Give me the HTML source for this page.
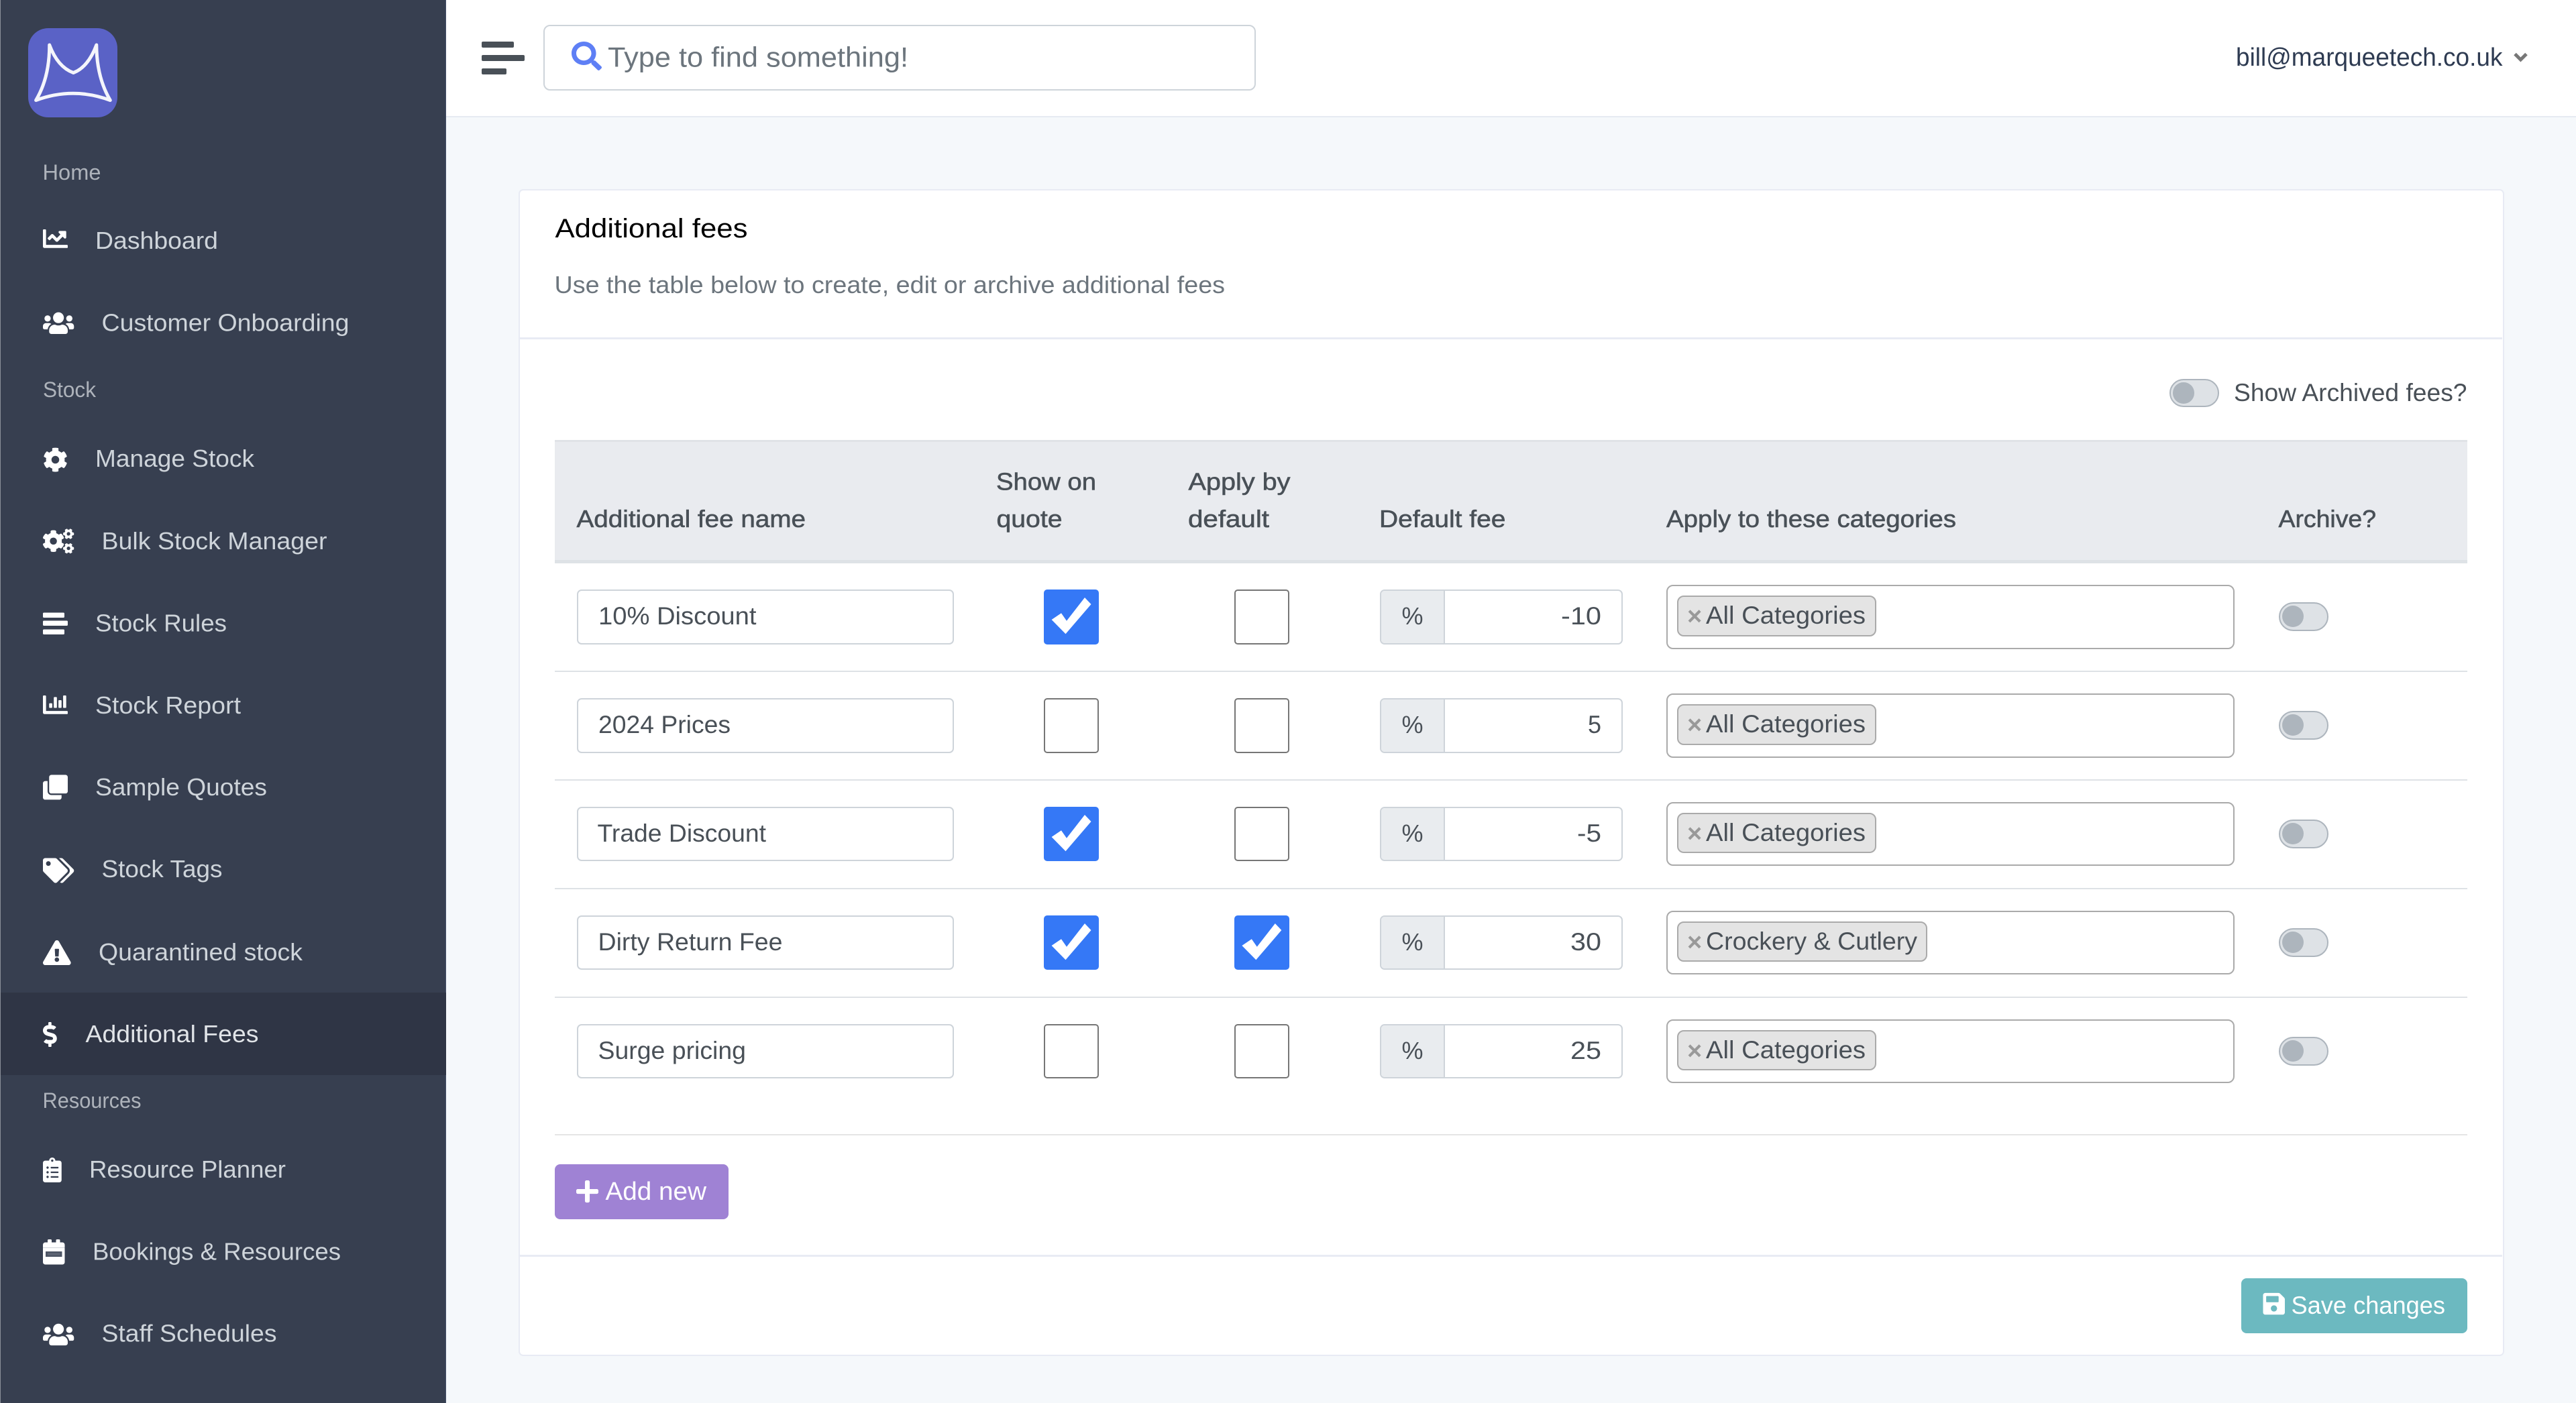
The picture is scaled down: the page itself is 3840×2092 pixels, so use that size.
<!DOCTYPE html>
<html lang="en">
<head>
<meta charset="utf-8">
<title>Additional fees</title>
<style>
html,body{margin:0;padding:0;width:3840px;height:2092px;overflow:hidden;background:#f5f8fb}
*{box-sizing:border-box}
#page{position:relative;width:3840px;height:2092px;overflow:hidden;background:#f5f8fb}
.abs,.box,.row{position:absolute}
svg.o{position:absolute;left:0;top:0;overflow:visible}
svg.o text{font-family:"Liberation Sans",sans-serif;white-space:pre}
#side{left:1px;top:0;width:664px;height:2092px;background:#373f50;position:absolute;border-right:1px solid #46506a}
#edge{left:0;top:0;width:1px;height:2092px;background:#8a8f99;position:absolute}
#active{position:absolute;left:1px;top:1480px;width:664px;height:123px;background:#2f3545}
#logo{position:absolute;left:42px;top:42px;width:133px;height:133px;border-radius:30px;background:#5a62c6}
#head{position:absolute;left:665px;top:0;width:3175px;height:175px;background:#fff;border-bottom:2.5px solid #e6eaf2}
#search{position:absolute;left:809.5px;top:37px;width:1062px;height:98px;background:#fff;border:2.5px solid #ced4da;border-radius:10px}
.bar{position:absolute;background:#495057;border-radius:2px;left:718px}
#card{position:absolute;left:772.5px;top:282px;width:2960px;height:1740px;background:#fff;border:2.5px solid #e8ebf4;border-radius:7px}
.hr{position:absolute;height:2.5px}
#thead{position:absolute;left:827px;top:656px;width:2851px;height:184px;background:#e9ebef;border-top:3px solid #e0e3e7;border-bottom:5px solid #dee2e6}
.input{position:absolute;left:859.5px;top:879px;width:562px;height:81.5px;background:#fff;border:2.5px solid #ced4da;border-radius:7px}
.cb{position:absolute;top:879px;width:82px;height:81.5px;background:#fff;border:2.5px solid #767676;border-radius:5px}
.cb.on{background:#3578f6;border-color:#3578f6}
.c1{left:1555.5px}.c2{left:1840px}
.grp{position:absolute;left:2057px;top:879px;width:362px;height:81.5px;background:#fff;border:2.5px solid #ced4da;border-radius:7px;overflow:hidden}
.add{position:absolute;left:0;top:0;bottom:0;width:95px;background:#e9ecef;border-right:2.5px solid #ced4da}
.sel{position:absolute;left:2484px;top:872px;width:846.5px;height:95.5px;background:#fff;border:2.5px solid #aaa;border-radius:10px}
.tag{position:absolute;left:2500px;top:888px;height:60.5px;background:#e4e4e4;border:2.5px solid #aaa;border-radius:10px}
.tog{position:absolute;background:#dee2e6;border:2.5px solid #adb5bd;border-radius:30px}
.tog i{position:absolute;display:block;background:#adb5bd;border-radius:50%}
.row{left:0;width:3840px;height:162px}
.btn{position:absolute;border-radius:8px}
</style>
</head>
<body>
<div id="page">
<div id="edge"></div>
<div id="side"></div>
<div id="active"></div>
<div id="logo"></div>
<div id="head"></div>
<div class="bar" style="top:62px;width:48px;height:9px"></div>
<div class="bar" style="top:82px;width:64px;height:9px"></div>
<div class="bar" style="top:102px;width:37px;height:8.5px"></div>
<div id="search"></div>
<div id="card"></div>
<div class="hr" style="left:775px;top:503px;width:2955px;background:#e8ebf4"></div>
<div class="hr" style="left:775px;top:1871px;width:2955px;height:3px;background:#e8ebf4"></div>
<div class="hr" style="left:827px;top:1690.5px;width:2851px;background:#e5e5e5"></div>
<div id="thead"></div>
<div class="hr" style="left:827px;top:999.5px;width:2851px;background:#dee2e6"></div>
<div class="hr" style="left:827px;top:1161.5px;width:2851px;background:#dee2e6"></div>
<div class="hr" style="left:827px;top:1323.5px;width:2851px;background:#dee2e6"></div>
<div class="hr" style="left:827px;top:1485.5px;width:2851px;background:#dee2e6"></div>
<div class="tog" style="left:3234px;top:565px;width:74px;height:42px"><i style="left:3px;top:3px;width:31.5px;height:31.5px"></i></div>
<div class="btn" style="left:827px;top:1735.5px;width:259px;height:82.5px;background:#9f82d4"></div>
<div class="btn" style="left:3341px;top:1906px;width:337px;height:82px;background:#6cb9c0"></div>

<svg class="o" width="3840" height="2092" viewBox="0 0 3840 2092">
<!-- logo -->
<path d="M73.7 67Q86 100 109.4 108.5Q131.5 100 143.8 67Q144 115 164.3 149.5Q109 129 53.6 149.5Q74 115 73.7 67Z" fill="none" stroke="#f4f5fb" stroke-width="5" stroke-linejoin="round"/>
<!-- sidebar labels -->
<g font-size="32" fill="#aeb3bb">
<text x="63.5" y="268" textLength="87" lengthAdjust="spacingAndGlyphs">Home</text>
<text x="64" y="592" textLength="79" lengthAdjust="spacingAndGlyphs">Stock</text>
<text x="63.5" y="1652" textLength="147" lengthAdjust="spacingAndGlyphs">Resources</text>
</g>
<g font-size="36" fill="#ced4da">
<text x="142" y="371" textLength="183" lengthAdjust="spacingAndGlyphs">Dashboard</text>
<text x="151.5" y="493.5" textLength="369" lengthAdjust="spacingAndGlyphs">Customer Onboarding</text>
<text x="142" y="696" textLength="237" lengthAdjust="spacingAndGlyphs">Manage Stock</text>
<text x="151.5" y="819" textLength="336" lengthAdjust="spacingAndGlyphs">Bulk Stock Manager</text>
<text x="142" y="941.5" textLength="196" lengthAdjust="spacingAndGlyphs">Stock Rules</text>
<text x="142" y="1064" textLength="217" lengthAdjust="spacingAndGlyphs">Stock Report</text>
<text x="142" y="1186" textLength="256" lengthAdjust="spacingAndGlyphs">Sample Quotes</text>
<text x="151.5" y="1308" textLength="180" lengthAdjust="spacingAndGlyphs">Stock Tags</text>
<text x="147" y="1432" textLength="304" lengthAdjust="spacingAndGlyphs">Quarantined stock</text>
<text x="127.5" y="1554" textLength="258" lengthAdjust="spacingAndGlyphs" fill="#e1e4e8">Additional Fees</text>
<text x="133" y="1756" textLength="293" lengthAdjust="spacingAndGlyphs">Resource Planner</text>
<text x="138" y="1878.5" textLength="370" lengthAdjust="spacingAndGlyphs">Bookings &amp; Resources</text>
<text x="151.5" y="2000.5" textLength="261" lengthAdjust="spacingAndGlyphs">Staff Schedules</text>
</g>
<!-- sidebar icons -->
<g fill="#fff">
<path transform="translate(64 337.4) scale(.0723)" d="M496 384H64V80c0-8.84-7.16-16-16-16H16C7.16 64 0 71.16 0 80v336c0 17.67 14.33 32 32 32h464c8.84 0 16-7.16 16-16v-32c0-8.84-7.16-16-16-16zM464 96H345.94c-21.38 0-32.09 25.85-16.97 40.97l32.4 32.4L288 242.75l-73.37-73.37c-12.5-12.5-32.76-12.5-45.25 0l-68.69 68.69c-6.25 6.25-6.25 16.38 0 22.63l22.62 22.62c6.25 6.25 16.38 6.25 22.63 0L192 237.25l73.37 73.37c12.5 12.5 32.76 12.5 45.25 0l96-96 32.4 32.4c15.12 15.12 40.97 4.41 40.97-16.97V112c.01-8.84-7.15-16-15.99-16z"/>
<path transform="translate(64 463.3) scale(.0723)" d="M96 224c35.3 0 64-28.7 64-64s-28.7-64-64-64-64 28.7-64 64 28.7 64 64 64zm448 0c35.3 0 64-28.7 64-64s-28.7-64-64-64-64 28.7-64 64 28.7 64 64 64zm32 32h-64c-17.6 0-33.5 7.1-45.1 18.6 40.3 22.1 68.9 62 75.1 109.4h66c17.7 0 32-14.3 32-32v-32c0-35.3-28.7-64-64-64zm-256 0c61.9 0 112-50.1 112-112S381.9 32 320 32 208 82.1 208 144s50.1 112 112 112zm76.8 32h-8.3c-20.8 10-43.9 16-68.5 16s-47.6-6-68.5-16h-8.3C179.6 288 128 339.6 128 403.2V432c0 26.5 21.5 48 48 48h288c26.5 0 48-21.5 48-48v-28.8c0-63.6-51.6-115.2-115.2-115.2zm-223.7-13.4C161.5 263.1 145.6 256 128 256H64c-35.3 0-64 28.7-64 64v32c0 17.7 14.3 32 32 32h65.9c6.3-47.4 34.9-87.3 75.2-109.4z"/>
<path transform="translate(64 667) scale(.0723)" d="M487.4 315.7l-42.6-24.6c4.3-23.2 4.3-47 0-70.2l42.6-24.6c4.9-2.8 7.1-8.6 5.5-14-11.1-35.6-30-67.8-54.7-94.6-3.8-4.1-10-5.1-14.8-2.3L380.8 110c-17.9-15.4-38.5-27.3-60.8-35.1V25.8c0-5.6-3.9-10.5-9.4-11.7-36.7-8.2-74.3-7.8-109.2 0-5.5 1.2-9.4 6.1-9.4 11.7V75c-22.2 7.9-42.8 19.8-60.8 35.1L88.7 85.5c-4.9-2.8-11-1.9-14.8 2.3-24.7 26.7-43.6 58.9-54.7 94.6-1.7 5.4.6 11.2 5.5 14L67.3 221c-4.3 23.2-4.3 47 0 70.2l-42.6 24.6c-4.9 2.8-7.1 8.6-5.5 14 11.1 35.6 30 67.8 54.7 94.6 3.8 4.1 10 5.1 14.8 2.3l42.6-24.6c17.9 15.4 38.5 27.3 60.8 35.1v49.2c0 5.6 3.9 10.5 9.4 11.7 36.7 8.2 74.3 7.8 109.2 0 5.5-1.2 9.4-6.1 9.4-11.7v-49.2c22.2-7.9 42.8-19.8 60.8-35.1l42.6 24.6c4.9 2.8 11 1.9 14.8-2.3 24.7-26.7 43.6-58.9 54.7-94.6 1.5-5.5-.7-11.3-5.6-14.1zM256 336c-44.1 0-80-35.9-80-80s35.9-80 80-80 80 35.9 80 80-35.9 80-80 80z"/>
<path transform="translate(64 788.4) scale(.0723)" d="M512.1 191l-8.2 14.3c-3 5.3-9.4 7.5-15.1 5.4-11.8-4.4-22.6-10.7-32.1-18.6-4.6-3.8-5.8-10.5-2.8-15.7l8.2-14.3c-6.9-8-12.3-17.3-15.9-27.4h-16.5c-6 0-11.2-4.3-12.2-10.3-2-12-2.1-24.6 0-37.1 1-6 6.2-10.4 12.2-10.4h16.5c3.6-10.1 9-19.4 15.9-27.4l-8.2-14.3c-3-5.2-1.9-11.9 2.8-15.7 9.5-7.9 20.4-14.2 32.1-18.6 5.7-2.1 12.1.1 15.1 5.4l8.2 14.3c10.5-1.9 21.2-1.9 31.7 0L552 6.3c3-5.3 9.4-7.5 15.1-5.4 11.8 4.4 22.6 10.7 32.1 18.6 4.6 3.8 5.8 10.5 2.8 15.7l-8.2 14.3c6.9 8 12.3 17.3 15.9 27.4h16.5c6 0 11.2 4.3 12.2 10.3 2 12 2.1 24.6 0 37.1-1 6-6.2 10.4-12.2 10.4h-16.5c-3.6 10.1-9 19.4-15.9 27.4l8.2 14.3c3 5.2 1.9 11.9-2.8 15.7-9.5 7.9-20.4 14.2-32.1 18.6-5.7 2.1-12.1-.1-15.1-5.4l-8.2-14.3c-10.4 1.9-21.2 1.9-31.7 0zm-10.5-58.8c38.5 29.6 82.4-14.3 52.8-52.8-38.5-29.7-82.4 14.3-52.8 52.8zM386.3 286.1l33.7 16.8c10.1 5.8 14.5 18.1 10.5 29.1-8.9 24.2-26.4 46.4-42.6 65.8-7.4 8.9-20.2 11.1-30.3 5.3l-29.1-16.8c-16 13.7-34.6 24.6-54.9 31.7v33.6c0 11.6-8.3 21.6-19.7 23.6-24.6 4.2-50.4 4.4-75.9 0-11.5-2-20-11.9-20-23.6V418c-20.3-7.2-38.9-18-54.9-31.7L74 403c-10 5.8-22.9 3.6-30.3-5.3-16.2-19.4-33.3-41.6-42.2-65.7-4-10.9.4-23.2 10.5-29.1l33.3-16.8c-3.9-20.9-3.9-42.4 0-63.4L12 205.8c-10.1-5.8-14.6-18.1-10.5-29 8.9-24.2 26-46.4 42.2-65.8 7.4-8.9 20.2-11.1 30.3-5.3l29.1 16.8c16-13.7 34.6-24.6 54.9-31.7V57.1c0-11.5 8.2-21.5 19.6-23.5 24.6-4.2 50.5-4.4 76-.1 11.5 2 20 11.9 20 23.6v33.6c20.3 7.2 38.9 18 54.9 31.7l29.1-16.8c10-5.8 22.9-3.6 30.3 5.3 16.2 19.4 33.2 41.6 42.1 65.8 4 10.9.1 23.2-10 29.1l-33.7 16.8c3.9 21 3.9 42.5 0 63.5zm-117.6 21.1c59.2-77-28.7-164.9-105.7-105.7-59.2 77 28.7 164.9 105.7 105.7zm243.4 182.7l-8.2 14.3c-3 5.3-9.4 7.5-15.1 5.4-11.8-4.4-22.6-10.7-32.1-18.6-4.6-3.8-5.8-10.5-2.8-15.7l8.2-14.3c-6.9-8-12.3-17.3-15.9-27.4h-16.5c-6 0-11.2-4.3-12.2-10.3-2-12-2.1-24.6 0-37.1 1-6 6.2-10.4 12.2-10.4h16.5c3.6-10.1 9-19.4 15.9-27.4l-8.2-14.3c-3-5.2-1.9-11.9 2.8-15.7 9.5-7.9 20.4-14.2 32.1-18.6 5.7-2.1 12.1.1 15.1 5.4l8.2 14.3c10.5-1.9 21.2-1.9 31.7 0l8.2-14.3c3-5.3 9.4-7.5 15.1-5.4 11.8 4.4 22.6 10.7 32.1 18.6 4.6 3.8 5.8 10.5 2.8 15.7l-8.2 14.3c6.9 8 12.3 17.3 15.9 27.4h16.5c6 0 11.2 4.3 12.2 10.3 2 12 2.1 24.6 0 37.1-1 6-6.2 10.4-12.2 10.4h-16.5c-3.6 10.1-9 19.4-15.9 27.4l8.2 14.3c3 5.2 1.9 11.9-2.8 15.7-9.5 7.9-20.4 14.2-32.1 18.6-5.7 2.1-12.1-.1-15.1-5.4l-8.2-14.3c-10.4 1.9-21.2 1.9-31.7 0zM501.6 431c38.5 29.6 82.4-14.3 52.8-52.8-38.5-29.6-82.4 14.3-52.8 52.8z"/>
<rect x="64" y="913.5" width="32" height="7.5" rx="1.5"/><rect x="64" y="925.5" width="37" height="7.5" rx="1.5"/><rect x="64" y="938.5" width="32" height="7.5" rx="1.5"/>
<path transform="translate(64 1032.4) scale(.0723)" d="M332.8 320h38.4c6.4 0 12.8-6.4 12.8-12.8V172.8c0-6.4-6.4-12.8-12.8-12.8h-38.4c-6.4 0-12.8 6.4-12.8 12.8v134.4c0 6.4 6.4 12.8 12.8 12.8zm96 0h38.4c6.4 0 12.8-6.4 12.8-12.8V76.8c0-6.4-6.4-12.8-12.8-12.8h-38.4c-6.4 0-12.8 6.4-12.8 12.8v230.4c0 6.4 6.4 12.8 12.8 12.8zm-288 0h38.4c6.4 0 12.8-6.4 12.8-12.8v-70.4c0-6.4-6.4-12.8-12.8-12.8h-38.4c-6.4 0-12.8 6.4-12.8 12.8v70.4c0 6.4 6.4 12.8 12.8 12.8zm96 0h38.4c6.4 0 12.8-6.4 12.8-12.8V108.8c0-6.4-6.4-12.8-12.8-12.8h-38.4c-6.4 0-12.8 6.4-12.8 12.8v198.4c0 6.4 6.4 12.8 12.8 12.8zM496 384H64V80c0-8.84-7.16-16-16-16H16C7.16 64 0 71.16 0 80v336c0 17.67 14.33 32 32 32h464c8.84 0 16-7.16 16-16v-32c0-8.84-7.16-16-16-16z"/>
<path transform="translate(64 1155.4) scale(.0723)" d="M464 0c26.51 0 48 21.49 48 48v288c0 26.51-21.49 48-48 48H176c-26.51 0-48-21.49-48-48V48c0-26.51 21.49-48 48-48h288M176 416c-44.112 0-80-35.888-80-80V128H48c-26.51 0-48 21.49-48 48v288c0 26.51 21.49 48 48 48h288c26.51 0 48-21.49 48-48v-48H176z"/>
<path transform="translate(64 1279.5) scale(.0723)" d="M497.941 225.941L286.059 14.059A48 48 0 0 0 252.118 0H48C21.49 0 0 21.49 0 48v204.118a48 48 0 0 0 14.059 33.941l211.882 211.882c18.744 18.745 49.136 18.746 67.882 0l204.118-204.118c18.745-18.745 18.745-49.137 0-67.882zM112 160c-26.51 0-48-21.49-48-48s21.49-48 48-48 48 21.49 48 48-21.49 48-48 48zm513.941 133.823L421.823 497.941c-18.745 18.745-49.137 18.745-67.882 0l-.36-.36L527.64 323.522c16.999-16.999 26.36-39.6 26.36-63.64s-9.362-46.641-26.36-63.64L331.397 0h48.721a48 48 0 0 1 33.941 14.059l211.882 211.882c18.745 18.745 18.745 49.137 0 67.882z"/>
<path transform="translate(64 1402) scale(.0723)" d="M569.517 440.013C587.975 472.007 564.806 512 527.94 512H48.054c-36.937 0-59.999-40.055-41.577-71.987L246.423 24.035c18.467-32.009 64.72-31.951 83.154 0l239.94 415.978zM288 354c-25.405 0-46 20.595-46 46s20.595 46 46 46 46-20.595 46-46-20.595-46-46-46zm-43.673-165.346l7.418 136c.347 6.364 5.609 11.346 11.982 11.346h48.546c6.373 0 11.635-4.982 11.982-11.346l7.418-136c.375-6.874-5.098-12.654-11.982-12.654h-63.383c-6.884 0-12.356 5.78-11.981 12.654z"/>
<path transform="translate(64 1524) scale(.0723)" d="M209.2 233.4l-108-31.6C88.7 198.2 80 186.5 80 173.5c0-16.3 13.2-29.5 29.5-29.5h66.3c12.2 0 24.2 3.7 34.2 10.5 6.1 4.1 14.3 3.1 19.5-2l34.8-34c7.1-6.9 6.1-18.4-1.8-24.5C238 74.8 207.4 64.1 176 64V16c0-8.8-7.2-16-16-16h-32c-8.8 0-16 7.2-16 16v48h-2.5C45.8 64-5.4 118.7.5 183.6c4.2 46.1 39.4 83.6 83.8 96.6l102.5 30c12.5 3.7 21.2 15.3 21.2 28.3 0 16.3-13.2 29.5-29.5 29.5h-66.3C100 368 88 364.3 78 357.5c-6.1-4.1-14.3-3.1-19.5 2l-34.8 34c-7.1 6.9-6.1 18.4 1.8 24.5 24.5 19.2 55.1 29.9 86.5 30v48c0 8.8 7.2 16 16 16h32c8.8 0 16-7.2 16-16v-48.2c46.6-.9 90.3-28.6 105.7-72.7 21.5-61.6-14.6-124.8-72.5-141.7z"/>
<path transform="translate(64 1726) scale(.0723)" d="M336 64h-80c0-35.3-28.7-64-64-64s-64 28.7-64 64H48C21.5 64 0 85.5 0 112v352c0 26.5 21.5 48 48 48h288c26.5 0 48-21.5 48-48V112c0-26.5-21.5-48-48-48zM96 424c-13.3 0-24-10.7-24-24s10.7-24 24-24 24 10.7 24 24-10.7 24-24 24zm0-96c-13.3 0-24-10.7-24-24s10.7-24 24-24 24 10.7 24 24-10.7 24-24 24zm0-96c-13.3 0-24-10.7-24-24s10.7-24 24-24 24 10.7 24 24-10.7 24-24 24zm96-192c13.3 0 24 10.7 24 24s-10.7 24-24 24-24-10.7-24-24 10.7-24 24-24zm128 368c0 4.4-3.6 8-8 8H168c-4.4 0-8-3.6-8-8v-16c0-4.4 3.6-8 8-8h144c4.4 0 8 3.6 8 8v16zm0-96c0 4.4-3.6 8-8 8H168c-4.4 0-8-3.6-8-8v-16c0-4.4 3.6-8 8-8h144c4.4 0 8 3.6 8 8v16zm0-96c0 4.4-3.6 8-8 8H168c-4.4 0-8-3.6-8-8v-16c0-4.4 3.6-8 8-8h144c4.4 0 8 3.6 8 8v16z"/>
<rect x="71" y="1848" width="6" height="9" rx="1.5"/><rect x="83.5" y="1848" width="6" height="9" rx="1.5"/>
<rect x="64" y="1852.5" width="32.5" height="33" rx="3.5"/>
<rect x="64" y="1860" width="32.5" height="1" fill="#cfd3d9"/>
<rect x="68" y="1866" width="24.5" height="8" fill="#4d5565"/>
<rect x="71" y="1868.5" width="18.5" height="3" fill="#5f6675"/>
<path transform="translate(64 1971.4) scale(.0723)" d="M96 224c35.3 0 64-28.7 64-64s-28.7-64-64-64-64 28.7-64 64 28.7 64 64 64zm448 0c35.3 0 64-28.7 64-64s-28.7-64-64-64-64 28.7-64 64 28.7 64 64 64zm32 32h-64c-17.6 0-33.5 7.1-45.1 18.6 40.3 22.1 68.9 62 75.1 109.4h66c17.7 0 32-14.3 32-32v-32c0-35.3-28.7-64-64-64zm-256 0c61.9 0 112-50.1 112-112S381.9 32 320 32 208 82.1 208 144s50.1 112 112 112zm76.8 32h-8.3c-20.8 10-43.9 16-68.5 16s-47.6-6-68.5-16h-8.3C179.6 288 128 339.6 128 403.2V432c0 26.5 21.5 48 48 48h288c26.5 0 48-21.5 48-48v-28.8c0-63.6-51.6-115.2-115.2-115.2zm-223.7-13.4C161.5 263.1 145.6 256 128 256H64c-35.3 0-64 28.7-64 64v32c0 17.7 14.3 32 32 32h65.9c6.3-47.4 34.9-87.3 75.2-109.4z"/>
</g>
<!-- header -->
<path transform="translate(852 62) scale(.0879 .084)" d="M505 442.7L405.3 343c-4.5-4.5-10.6-7-17-7H372c27.6-35.3 44-79.7 44-128C416 93.1 322.9 0 208 0S0 93.1 0 208s93.1 208 208 208c48.3 0 92.7-16.4 128-44v16.3c0 6.4 2.5 12.5 7 17l99.7 99.7c9.4 9.4 24.6 9.4 33.9 0l28.3-28.3c9.4-9.4 9.4-24.6.1-34zM208 336c-70.7 0-128-57.2-128-128 0-70.7 57.2-128 128-128 70.7 0 128 57.2 128 128 0 70.7-57.2 128-128 128z" fill="#5e7ff5"/>
<text x="906" y="99.5" font-size="42" fill="#6c757d" textLength="448" lengthAdjust="spacingAndGlyphs">Type to find something!</text>
<text x="3333" y="98" font-size="38" fill="#2e3b52" textLength="397.5" lengthAdjust="spacingAndGlyphs">bill@marqueetech.co.uk</text>
<path d="M3749 80.5L3757.5 89L3766 80.5" fill="none" stroke="#777" stroke-width="5"/>
<!-- card head -->
<text x="827.5" y="354" font-size="40" fill="#000" textLength="287" lengthAdjust="spacingAndGlyphs">Additional fees</text>
<text x="826.5" y="437" font-size="36" fill="#6c757d" textLength="999.5" lengthAdjust="spacingAndGlyphs">Use the table below to create, edit or archive additional fees</text>
<text x="3330" y="598" font-size="37" fill="#495057" textLength="347.5" lengthAdjust="spacingAndGlyphs">Show Archived fees?</text>
<!-- table head -->
<g font-size="36" fill="#495057" stroke="#495057" stroke-width=".6">
<text x="859.5" y="786" textLength="341.5" lengthAdjust="spacingAndGlyphs">Additional fee name</text>
<text x="1485" y="730.5" textLength="149" lengthAdjust="spacingAndGlyphs">Show on</text>
<text x="1485.5" y="786" textLength="98" lengthAdjust="spacingAndGlyphs">quote</text>
<text x="1771.5" y="730.5" textLength="152" lengthAdjust="spacingAndGlyphs">Apply by</text>
<text x="1771" y="786" textLength="121" lengthAdjust="spacingAndGlyphs">default</text>
<text x="2056" y="786" textLength="188.5" lengthAdjust="spacingAndGlyphs">Default fee</text>
<text x="2484" y="786" textLength="432" lengthAdjust="spacingAndGlyphs">Apply to these categories</text>
<text x="3396.5" y="786" textLength="145.5" lengthAdjust="spacingAndGlyphs">Archive?</text>
</g>
<!-- buttons -->
<path transform="translate(859 1757.7) scale(.0737)" d="M416 208H272V64c0-17.67-14.33-32-32-32h-32c-17.67 0-32 14.33-32 32v144H32c-17.67 0-32 14.33-32 32v32c0 17.67 14.33 32 32 32h144v144c0 17.67 14.33 32 32 32h32c17.67 0 32-14.33 32-32V304h144c17.67 0 32-14.33 32-32v-32c0-17.67-14.33-32-32-32z" fill="#fff" stroke="#fff" stroke-width="0"/>
<text x="902.5" y="1789" font-size="38" fill="#fff" textLength="150.5" lengthAdjust="spacingAndGlyphs">Add new</text>
<path transform="translate(3373.5 1925.5) scale(.0725)" d="M433.941 129.941l-83.882-83.882A48 48 0 0 0 316.118 32H48C21.49 32 0 53.49 0 80v352c0 26.51 21.49 48 48 48h352c26.51 0 48-21.49 48-48V163.882a48 48 0 0 0-14.059-33.941zM224 416c-35.346 0-64-28.654-64-64 0-35.346 28.654-64 64-64s64 28.654 64 64c0 35.346-28.654 64-64 64zm96-304.52V212c0 6.627-5.373 12-12 12H76c-6.627 0-12-5.373-12-12V108c0-6.627 5.373-12 12-12h228.52c3.183 0 6.235 1.264 8.485 3.515l3.48 3.48A11.996 11.996 0 0 1 320 111.48z" fill="#fff"/>
<text x="3415.5" y="1959" font-size="37" fill="#fff" textLength="229.5" lengthAdjust="spacingAndGlyphs">Save changes</text>
</svg>

<!-- row 1 -->
<div class="row" style="top:0">
<div class="input"></div><div class="cb c1 on"></div><div class="cb c2"></div>
<div class="grp"><div class="add"></div></div>
<div class="sel"></div><div class="tag" style="width:296.5px"></div>
<div class="tog" style="left:3396.5px;top:898px;width:74px;height:43px"><i style="left:3px;top:3px;width:32px;height:32px"></i></div>
<svg class="o" width="3840" height="1000" viewBox="0 0 3840 1000">
<polygon points="1617,891 1626.5,901 1588.5,945.3 1567.6,924 1582,914.3 1590,925.7" fill="#fff"/>
<g font-size="37" fill="#495057">
<text x="892" y="931" textLength="235.5" lengthAdjust="spacingAndGlyphs">10% Discount</text>
<text x="2105.5" y="931" text-anchor="middle" font-size="36">%</text>
<text x="2327" y="931" textLength="60" lengthAdjust="spacingAndGlyphs">-10</text>
<text x="2543" y="930" textLength="238" lengthAdjust="spacingAndGlyphs">All Categories</text>
<text x="2515" y="931.5" font-size="38" font-weight="bold" fill="#999">×</text>
</g>
</svg>
</div>
<!-- row 2 -->
<div class="row" style="top:162px">
<div class="input"></div><div class="cb c1"></div><div class="cb c2"></div>
<div class="grp"><div class="add"></div></div>
<div class="sel"></div><div class="tag" style="width:296.5px"></div>
<div class="tog" style="left:3396.5px;top:898px;width:74px;height:43px"><i style="left:3px;top:3px;width:32px;height:32px"></i></div>
<svg class="o" width="3840" height="1000" viewBox="0 0 3840 1000">
<g font-size="37" fill="#495057">
<text x="892" y="931" textLength="197" lengthAdjust="spacingAndGlyphs">2024 Prices</text>
<text x="2105.5" y="931" text-anchor="middle" font-size="36">%</text>
<text x="2367" y="931" textLength="20" lengthAdjust="spacingAndGlyphs">5</text>
<text x="2543" y="930" textLength="238" lengthAdjust="spacingAndGlyphs">All Categories</text>
<text x="2515" y="931.5" font-size="38" font-weight="bold" fill="#999">×</text>
</g>
</svg>
</div>
<!-- row 3 -->
<div class="row" style="top:323.5px">
<div class="input"></div><div class="cb c1 on"></div><div class="cb c2"></div>
<div class="grp"><div class="add"></div></div>
<div class="sel"></div><div class="tag" style="width:296.5px"></div>
<div class="tog" style="left:3396.5px;top:898px;width:74px;height:43px"><i style="left:3px;top:3px;width:32px;height:32px"></i></div>
<svg class="o" width="3840" height="1000" viewBox="0 0 3840 1000">
<polygon points="1617,891 1626.5,901 1588.5,945.3 1567.6,924 1582,914.3 1590,925.7" fill="#fff"/>
<g font-size="37" fill="#495057">
<text x="890.5" y="931" textLength="251.5" lengthAdjust="spacingAndGlyphs">Trade Discount</text>
<text x="2105.5" y="931" text-anchor="middle" font-size="36">%</text>
<text x="2351" y="931" textLength="36" lengthAdjust="spacingAndGlyphs">-5</text>
<text x="2543" y="930" textLength="238" lengthAdjust="spacingAndGlyphs">All Categories</text>
<text x="2515" y="931.5" font-size="38" font-weight="bold" fill="#999">×</text>
</g>
</svg>
</div>
<!-- row 4 -->
<div class="row" style="top:485.5px">
<div class="input"></div><div class="cb c1 on"></div><div class="cb c2 on"></div>
<div class="grp"><div class="add"></div></div>
<div class="sel"></div><div class="tag" style="width:372.5px"></div>
<div class="tog" style="left:3396.5px;top:898px;width:74px;height:43px"><i style="left:3px;top:3px;width:32px;height:32px"></i></div>
<svg class="o" width="3840" height="1000" viewBox="0 0 3840 1000">
<polygon points="1617,891 1626.5,901 1588.5,945.3 1567.6,924 1582,914.3 1590,925.7" fill="#fff"/>
<polygon points="1900.8,891 1910.3,901 1872.3,945.3 1851.4,924 1865.8,914.3 1873.8,925.7" fill="#fff"/>
<g font-size="37" fill="#495057">
<text x="891.5" y="931" textLength="275" lengthAdjust="spacingAndGlyphs">Dirty Return Fee</text>
<text x="2105.5" y="931" text-anchor="middle" font-size="36">%</text>
<text x="2341" y="931" textLength="46" lengthAdjust="spacingAndGlyphs">30</text>
<text x="2543" y="930" textLength="315" lengthAdjust="spacingAndGlyphs">Crockery &amp; Cutlery</text>
<text x="2515" y="931.5" font-size="38" font-weight="bold" fill="#999">×</text>
</g>
</svg>
</div>
<!-- row 5 -->
<div class="row" style="top:647.5px">
<div class="input"></div><div class="cb c1"></div><div class="cb c2"></div>
<div class="grp"><div class="add"></div></div>
<div class="sel"></div><div class="tag" style="width:296.5px"></div>
<div class="tog" style="left:3396.5px;top:898px;width:74px;height:43px"><i style="left:3px;top:3px;width:32px;height:32px"></i></div>
<svg class="o" width="3840" height="1000" viewBox="0 0 3840 1000">
<g font-size="37" fill="#495057">
<text x="891.5" y="931" textLength="220.5" lengthAdjust="spacingAndGlyphs">Surge pricing</text>
<text x="2105.5" y="931" text-anchor="middle" font-size="36">%</text>
<text x="2341" y="931" textLength="46" lengthAdjust="spacingAndGlyphs">25</text>
<text x="2543" y="930" textLength="238" lengthAdjust="spacingAndGlyphs">All Categories</text>
<text x="2515" y="931.5" font-size="38" font-weight="bold" fill="#999">×</text>
</g>
</svg>
</div>
</div>
</body>
</html>
